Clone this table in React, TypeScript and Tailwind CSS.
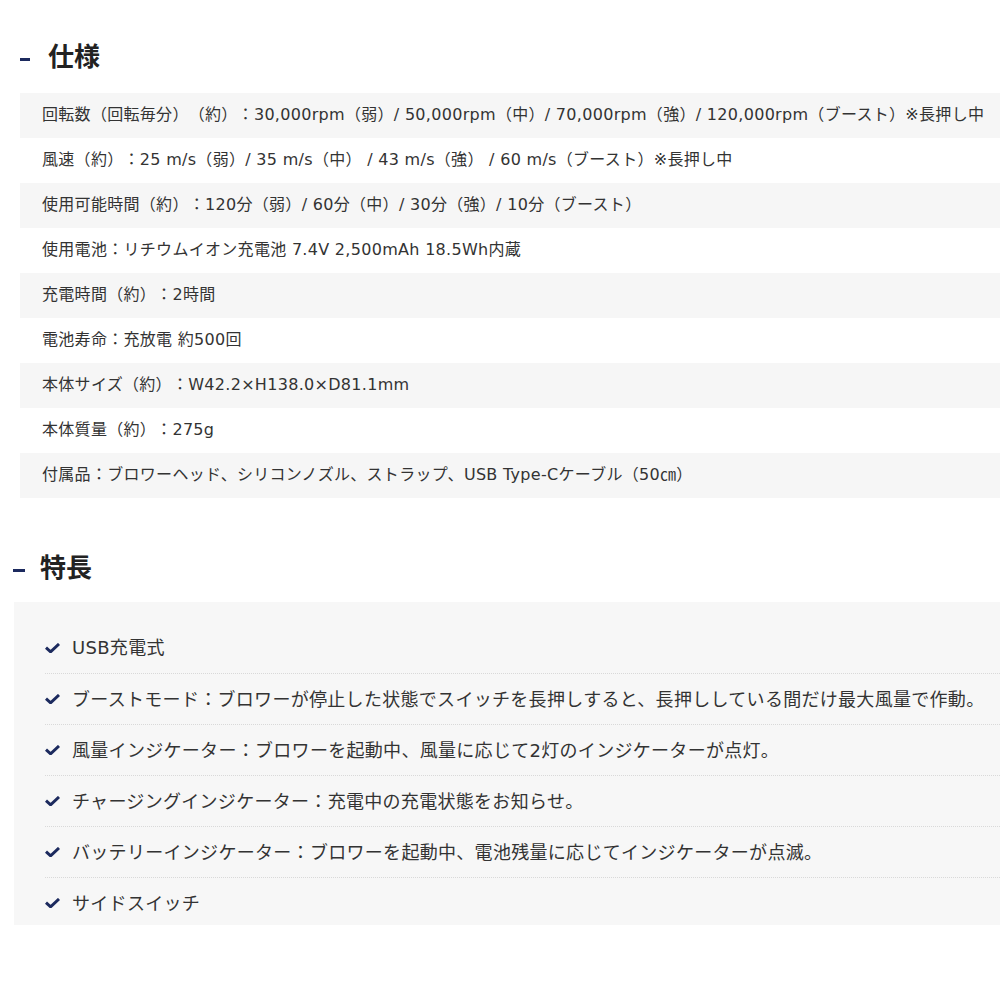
import React from "react";

const specs = [
  "回転数（回転毎分）（約）：30,000rpm（弱）/ 50,000rpm（中）/ 70,000rpm（強）/ 120,000rpm（ブースト）※長押し中",
  "風速（約）：25 m/s（弱）/ 35 m/s（中） / 43 m/s（強） / 60 m/s（ブースト）※長押し中",
  "使用可能時間（約）：120分（弱）/ 60分（中）/ 30分（強）/ 10分（ブースト）",
  "使用電池：リチウムイオン充電池 7.4V 2,500mAh 18.5Wh内蔵",
  "充電時間（約）：2時間",
  "電池寿命：充放電 約500回",
  "本体サイズ（約）：W42.2×H138.0×D81.1mm",
  "本体質量（約）：275g",
  "付属品：ブロワーヘッド、シリコンノズル、ストラップ、USB Type-Cケーブル（50㎝）",
];

const features = [
  "USB充電式",
  "ブーストモード：ブロワーが停止した状態でスイッチを長押しすると、長押ししている間だけ最大風量で作動。",
  "風量インジケーター：ブロワーを起動中、風量に応じて2灯のインジケーターが点灯。",
  "チャージングインジケーター：充電中の充電状態をお知らせ。",
  "バッテリーインジケーター：ブロワーを起動中、電池残量に応じてインジケーターが点滅。",
  "サイドスイッチ",
];

function Check() {
  return (
    <svg width="15" height="10" viewBox="0 0 15 10" className="shrink-0">
      <path d="M1 4.6 L5.6 8.8 L14 1" fill="none" stroke="#1c2a5e" strokeWidth="3" strokeLinecap="butt" strokeLinejoin="miter" />
    </svg>
  );
}

export default function App() {
  return (
    <div
      className="w-[1000px] h-[1000px] bg-white overflow-hidden text-[#333] [text-spacing-trim:space-all]"
      style={{ fontFamily: '"DejaVu Sans", "Noto Sans CJK JP", sans-serif' }}
    >
      <div className="pt-[37px] pl-[20px] flex items-center h-[73px]">
        <div className="w-[10px] h-[3px] bg-[#1c2a5e] mt-[8px]" />
        <h2
          className="ml-[18px] text-[26px] leading-[36px] font-bold text-[#222]"
          style={{ fontFamily: '"Noto Sans CJK JP", sans-serif' }}
        >
          仕様
        </h2>
      </div>
      <div className="mt-[20px] ml-[20px]">
        {specs.map((s, i) => (
          <div
            key={i}
            className={`h-[45px] flex items-center pl-[22px] pb-[1px] text-[16px] tracking-[0.3px] whitespace-nowrap ${i % 2 === 0 ? "bg-[#f6f6f6]" : "bg-white"}`}
          >
            {s}
          </div>
        ))}
      </div>
      <div className="mt-[50px] pl-[13px] flex items-center h-[36px]">
        <div className="w-[12px] h-[3px] bg-[#1c2a5e] mt-[8px]" />
        <h2
          className="ml-[15px] text-[26px] leading-[36px] font-bold text-[#222]"
          style={{ fontFamily: '"Noto Sans CJK JP", sans-serif' }}
        >
          特長
        </h2>
      </div>
      <div className="mt-[18px] ml-[14px] bg-[#f7f7f7] h-[323px] overflow-hidden pt-[20px] pl-[31px]">
        {features.map((f, i) => (
          <div
            key={i}
            className={`h-[51px] flex items-center gap-[12px] text-[18px] tracking-[0.3px] text-[#333] whitespace-nowrap ${i > 0 ? "border-t border-dotted border-[#d9d9d9]" : ""}`}
          >
            <Check />
            <span>{f}</span>
          </div>
        ))}
      </div>
    </div>
  );
}
